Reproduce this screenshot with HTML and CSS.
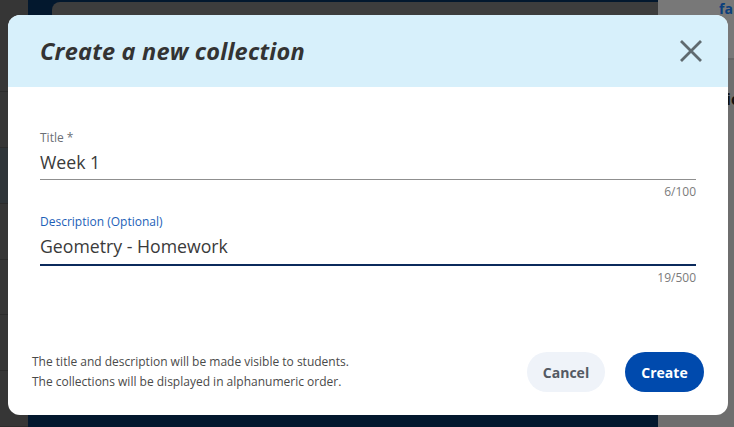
FILE: index.html
```html
<!DOCTYPE html>
<html>
<head>
<meta charset="utf-8">
<link rel="stylesheet" href="styles.css">
</head>
<body>
<div class="page">
  <div class="side">
    <div class="side-row"></div>
    <div class="side-row"></div>
    <div class="side-row dark"></div>
    <div class="side-row"></div>
    <div class="side-row"></div>
    <div class="side-row"></div>
    <div class="side-row"></div>
  </div>
  <div class="main">
    <div class="panel"></div>
  </div>
  <div class="right">
    <div class="right-top"><span class="fa">fa</span></div>
    <div class="right-body"><span class="ic">ic</span></div>
  </div>
</div>

<div class="modal">
  <div class="modal-head">
    <h1 class="modal-title">Create a new collection</h1>
    <button class="close" aria-label="Close">
      <svg width="24" height="24" viewBox="0 0 24 24"><path d="M2 2 L22 22 M22 2 L2 22" stroke="#5f6a6f" stroke-width="2.8" fill="none"/></svg>
    </button>
  </div>
  <div class="modal-body">
    <div class="field">
      <label class="field-label">Title *</label>
      <div class="field-input">Week 1</div>
      <div class="counter">6/100</div>
    </div>
    <div class="field focused">
      <label class="field-label">Description (Optional)</label>
      <div class="field-input">Geometry - Homework</div>
      <div class="counter">19/500</div>
    </div>
  </div>
  <div class="modal-foot">
    <p class="note">The title and description will be made visible to students.<br>The collections will be displayed in alphanumeric order.</p>
    <div class="actions">
      <button class="btn cancel">Cancel</button>
      <button class="btn create">Create</button>
    </div>
  </div>
</div>
</body>
</html>
```
FILE: styles.css
```css
* { box-sizing: border-box; }
html, body { margin: 0; padding: 0; }
body {
  width: 734px;
  height: 427px;
  overflow: hidden;
  font-family: "Open Sans", "Noto Sans", sans-serif;
  position: relative;
  background: #353535;
}
.page {
  display: flex;
  width: 734px;
  height: 427px;
}
.side {
  width: 28px;
  flex-shrink: 0;
  background: #363636;
  display: flex;
  flex-direction: column;
}
.side-row {
  height: 63px;
  border-bottom: 1px solid #2c2c2c;
}
.side-row:first-child { height: 104px; }
.side-row.dark { background: #2f3539; }
.main {
  width: 630px;
  flex-shrink: 0;
  background: #03182e;
  padding: 2px 0 0 24px;
}
.panel {
  height: 405px;
  background: #3d3d3d;
  border-top-left-radius: 8px;
}
.right {
  flex: 1;
  min-width: 0;
  overflow: hidden;
  background: #6e6e6e;
  display: flex;
  flex-direction: column;
}
.right-top {
  height: 60px;
  background: #787878;
  border-bottom: 2px solid #666666;
  padding: 0 0 0 61px;
  white-space: nowrap;
}
.fa {
  font-family: "Open Sans", sans-serif;
  font-weight: 700;
  font-size: 14px;
  color: #0b3f7c;
  line-height: 18px;
  position: relative;
  top: -3px;
}
.right-body { padding: 28px 0 0 68px; white-space: nowrap; }
.ic {
  font-weight: 700;
  font-size: 16px;
  color: #111;
}

.modal {
  position: absolute;
  left: 8px;
  top: 15px;
  width: 720px;
  height: 400px;
  background: #ffffff;
  border-radius: 12px;
  overflow: hidden;
  display: flex;
  flex-direction: column;
}
.modal-head {
  height: 72px;
  flex-shrink: 0;
  background: #d7f0fb;
  display: flex;
  align-items: center;
  justify-content: space-between;
  padding: 0 25px 0 32px;
}
.modal-title {
  margin: 0;
  font-family: "Open Sans", sans-serif;
  font-style: italic;
  font-weight: 700;
  font-size: 23.5px;
  color: #333333;
  letter-spacing: 0.2px;
}
.close {
  border: 0;
  background: none;
  padding: 0;
  width: 24px;
  height: 24px;
  display: flex;
}
.modal-body {
  padding: 43px 32px 0 32px;
  display: flex;
  flex-direction: column;
  gap: 14px;
}
.field { display: flex; flex-direction: column; }
.field-label {
  font-size: 12px;
  line-height: 16px;
  color: #6b6f76;
}
.field-input {
  margin-top: 3px;
  font-size: 17.7px;
  line-height: 26px;
  color: #3a3a3a;
  padding-bottom: 4px;
  border-bottom: 1px solid #8f8f8f;
}
.focused .field-label { color: #1d5fb8; }
.focused .field-input { border-bottom: 2px solid #0b2a5c; padding-bottom: 5px; }
.counter {
  text-align: right;
  font-size: 12px;
  line-height: 16px;
  margin-top: 4px;
  color: #7b7b7b;
}
.modal-foot {
  margin-top: auto;
  padding: 0 24px 23px 24px;
  display: flex;
  align-items: center;
  justify-content: space-between;
}
.note {
  margin: 0;
  font-size: 12px;
  line-height: 20px;
  color: #4a4a4a;
}
.actions { display: flex; gap: 20px; }
.btn {
  height: 40px;
  border: 0;
  border-radius: 20px;
  font-family: "Open Sans", sans-serif;
  font-weight: 700;
  font-size: 14px;
  padding: 0;
}
.cancel { width: 78px; background: #eff3f9; color: #545a63; }
.create { width: 79px; background: #004aad; color: #ffffff; }
```
